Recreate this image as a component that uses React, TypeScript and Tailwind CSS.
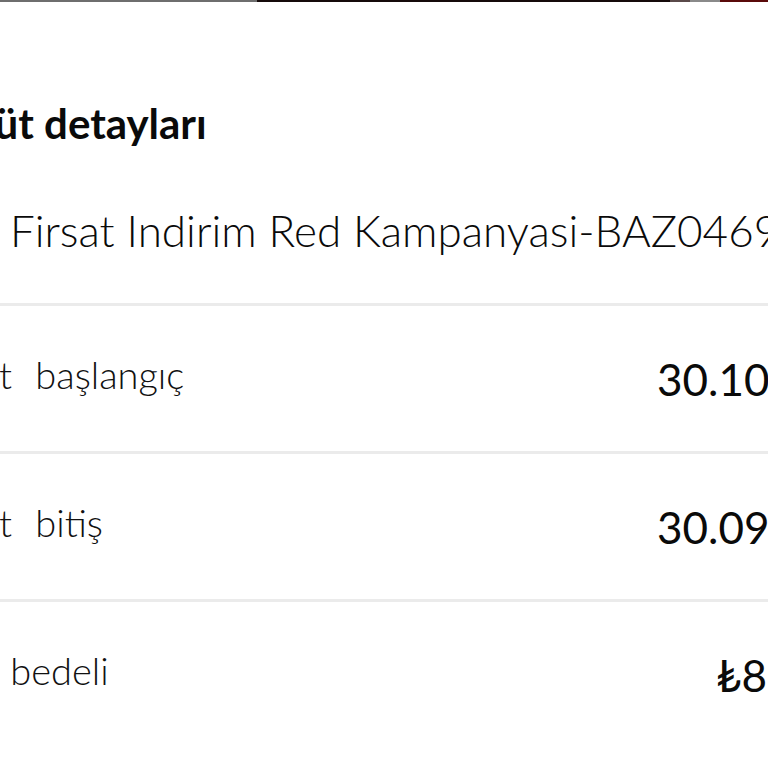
import React from "react";

const font = { fontFamily: "Lato, 'Open Sans', sans-serif" };

function Row({ label, shift, value, valuePad }: { label: string; shift: string; value: string; valuePad: string }) {
  return (
    <div className="flex h-[145px] items-center">
      <div className="flex-1 overflow-hidden whitespace-nowrap pb-[8px]">
        <span className={`block text-[38px] font-light text-[#111] [word-spacing:13px] ${shift}`}>{label}</span>
      </div>
      <div className={`w-[111px] overflow-hidden whitespace-nowrap ${valuePad}`}>
        <span className="block text-[44px] font-normal text-[#0a0a0a]">{value}</span>
      </div>
    </div>
  );
}

export default function App() {
  return (
    <div className="w-[768px] h-[768px] overflow-hidden bg-white" style={font}>
      <div className="flex h-[2px]">
        <div className="w-[257px] bg-[#6e6e6e]" />
        <div className="w-[413px] bg-[#150a0a]" />
        <div className="w-[20px] bg-[#5a4a4a]" />
        <div className="w-[30px] bg-[#8a8a8a]" />
        <div className="flex-1 bg-[#5a0a0a]" />
      </div>
      <div className="mt-[97px] overflow-hidden whitespace-nowrap">
        <span className="block -ml-[116px] text-[42px] font-bold leading-[48px] text-[#0a0a0a]">Taahhüt detayları</span>
      </div>
      <div className="mt-[57px] overflow-hidden whitespace-nowrap pl-[10px]">
        <span className="block text-[44px] font-light leading-[52px] text-[#0a0a0a]">Firsat Indirim Red Kampanyasi-BAZ0469</span>
      </div>
      <div className="mt-[47px] h-[3px] bg-[#ebebeb]" />
      <Row label="Taahhüt başlangıç" shift="-ml-[118px]" value="30.10.2023" valuePad="pl-0" />
      <div className="h-[3px] bg-[#ebebeb]" />
      <Row label="Taahhüt bitiş" shift="-ml-[118px]" value="30.09.2025" valuePad="pl-0" />
      <div className="h-[3px] bg-[#ebebeb]" />
      <Row label="Taahhüt bedeli" shift="-ml-[143px]" value="₺8.640" valuePad="pl-[59px]" />
    </div>
  );
}
